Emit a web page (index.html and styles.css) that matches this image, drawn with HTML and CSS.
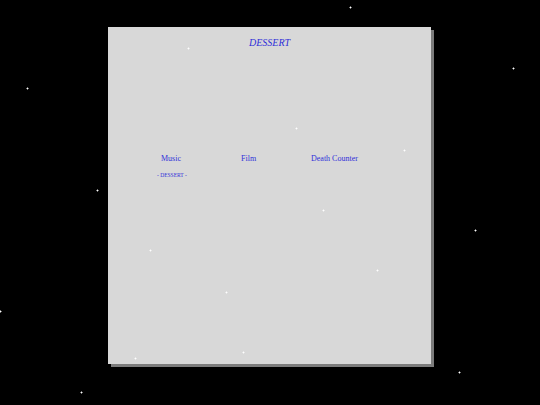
FILE: index.html
```html
<!DOCTYPE html>
<html>
<head>
<meta charset="utf-8">
<link rel="stylesheet" href="styles.css">
</head>
<body>
<div class="page">
  <div class="panel">
    <h1 class="title">DESSERT</h1>
    <nav class="nav">
      <a class="nav-item">Music</a>
      <a class="nav-item">Film</a>
      <a class="nav-item">Death Counter</a>
    </nav>
    <div class="sub">- DESSERT -</div>
  </div>
  <div class="stars">
    <span class="star" style="left:350px;top:7px"></span>
    <span class="star" style="left:188px;top:48px"></span>
    <span class="star" style="left:513px;top:68px"></span>
    <span class="star" style="left:27px;top:88px"></span>
    <span class="star" style="left:296px;top:128px"></span>
    <span class="star" style="left:404px;top:150px"></span>
    <span class="star" style="left:97px;top:190px"></span>
    <span class="star" style="left:323px;top:210px"></span>
    <span class="star" style="left:475px;top:230px"></span>
    <span class="star" style="left:150px;top:250px"></span>
    <span class="star" style="left:377px;top:270px"></span>
    <span class="star" style="left:226px;top:292px"></span>
    <span class="star" style="left:0px;top:311px"></span>
    <span class="star" style="left:243px;top:352px"></span>
    <span class="star" style="left:135px;top:358px"></span>
    <span class="star" style="left:459px;top:372px"></span>
    <span class="star" style="left:81px;top:392px"></span>
  </div>
</div>
</body>
</html>
```
FILE: styles.css
```css
html, body {
  margin: 0;
  padding: 0;
  background: #000;
}
body {
  font-family: "Liberation Serif", "Times New Roman", serif;
  width: 540px;
  height: 405px;
  overflow: hidden;
}
.page {
  position: relative;
  width: 540px;
  height: 405px;
  padding-top: 27px;
  box-sizing: border-box;
}
.panel {
  margin-left: 108px;
  width: 323px;
  height: 337px;
  background: #d8d8d8;
  box-shadow: 3px 3px 0 #7c7c7c;
  display: flex;
  flex-direction: column;
}
.title {
  margin: 0;
  padding-top: 10px;
  font-size: 10px;
  font-weight: normal;
  font-style: italic;
  text-align: center;
  color: #3030d8;
  line-height: 11px;
}
.nav {
  display: grid;
  grid-template-columns: 80px 70px auto;
  padding-left: 53px;
  margin-top: 106px;
  font-size: 8px;
  line-height: 10px;
}
.nav-item {
  color: #3030d8;
}
.sub {
  margin-top: 8px;
  padding-left: 49px;
  font-size: 5.5px;
  line-height: 6px;
  color: #3030d8;
}
.stars {
  position: absolute;
  inset: 0;
  pointer-events: none;
}
.star {
  position: absolute;
  width: 1px;
  height: 1px;
  background: #fff;
  box-shadow: 1px 0 0 rgba(255,255,255,0.45), -1px 0 0 rgba(255,255,255,0.45), 0 1px 0 rgba(255,255,255,0.45), 0 -1px 0 rgba(255,255,255,0.45);
}
```
